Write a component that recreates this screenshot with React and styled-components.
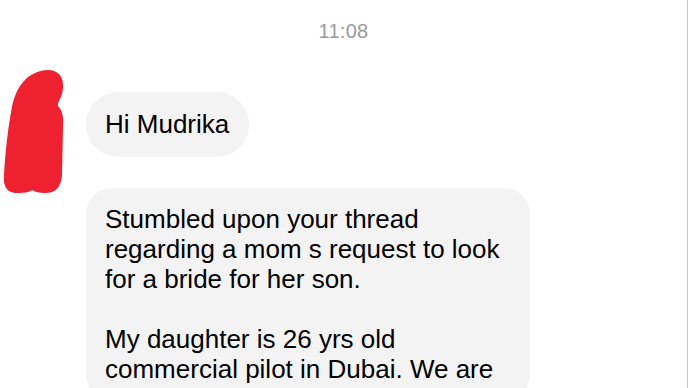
import React from 'react';
import styled, { createGlobalStyle } from 'styled-components';

const GlobalStyle = createGlobalStyle`
  html, body {
    margin: 0;
    padding: 0;
    background: #ffffff;
    overflow: hidden;
  }
  body {
    font-family: "Liberation Sans", Arial, sans-serif;
    -webkit-font-smoothing: antialiased;
  }
`;

// Chat screen, with the thin divider on its right edge
const Screen = styled.div`
  width: 687px;
  height: 100vh;
  border-right: 1px solid #c8c8c8;
  background: #ffffff;
  display: flex;
  flex-direction: column;
`;

const TimeStamp = styled.div`
  padding-top: 20px;
  text-align: center;
  font-size: 20px;
  line-height: 22px;
  letter-spacing: 0.3px;
  color: #9a9a9a;
`;

const Thread = styled.div`
  margin-top: 23px;
  display: grid;
  grid-template-columns: 86px 1fr;
  align-items: start;
`;

const Avatar = styled.svg`
  display: block;
  width: 80px;
  height: 135px;
`;

const Messages = styled.div`
  padding-top: 27px;
  display: flex;
  flex-direction: column;
  align-items: flex-start;
  gap: 31px;
`;

const Bubble = styled.div`
  background: #f3f3f3;
  color: #000000;
  font-size: 26px;
  line-height: 30px;
  white-space: pre-wrap;
  border-radius: ${(p) => (p.$pill ? '33px' : '26px')};
  padding: ${(p) => (p.$pill ? '17px 20px 18px 19px' : '16px 20px 16px 19px')};
  width: ${(p) => (p.$width ? `${p.$width}px` : 'auto')};
  box-sizing: border-box;
`;

const longMessage = [
  'Stumbled upon your thread',
  'regarding a mom s request to look',
  'for a bride for her son.',
  '',
  'My daughter is 26 yrs old',
  'commercial pilot in Dubai. We are',
].join('\n');

// Red scribble hiding the sender's avatar
const Scribble = () => (
  <Avatar viewBox="0 0 80 135">
    <path
      d="M48 5
         C58 5 64 12 63 22
         C63 32 57 37 58 41
         C62 45 64 52 63 62
         L62 110
         C61 122 56 128 45 128
         C39 128 35 127 32 125
         C28 128 22 128 15 128
         C6 127 3 120 4 110
         C5 90 8 62 12 42
         C16 22 27 6 48 5 Z"
      fill="#ee2131"
    />
  </Avatar>
);

const App = () => (
  <>
    <GlobalStyle />
    <Screen>
      <TimeStamp>11:08</TimeStamp>
      <Thread>
        <Scribble />
        <Messages>
          <Bubble $pill>Hi Mudrika</Bubble>
          <Bubble $width={444}>{longMessage}</Bubble>
        </Messages>
      </Thread>
    </Screen>
  </>
);

export default App;
